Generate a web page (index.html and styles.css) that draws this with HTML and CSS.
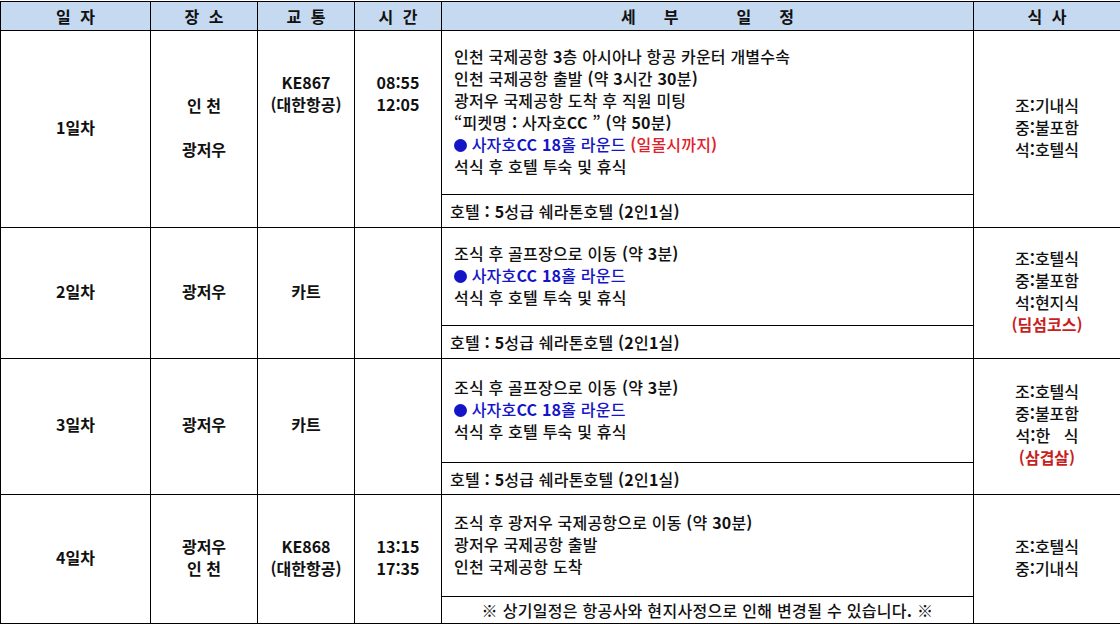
FILE: index.html
```html
<!DOCTYPE html>
<html lang="ko">
<head>
<meta charset="utf-8">
<link rel="stylesheet" href="styles.css">
</head>
<body>
<table class="sched">
  <colgroup>
    <col class="c-day"><col class="c-place"><col class="c-trans"><col class="c-time"><col class="c-detail"><col class="c-meal">
  </colgroup>
  <thead>
    <tr class="head">
      <th>일 자</th><th>장 소</th><th>교 통</th><th>시 간</th>
      <th><span class="sp">세</span><span class="sp">부</span><span class="sp wide">일</span><span class="sp">정</span></th>
      <th>식 사</th>
    </tr>
  </thead>
  <tbody>
    <tr class="r1a">
      <td rowspan="2" class="b">1일차</td>
      <td rowspan="2" class="b">인 천<br>&nbsp;<br>광저우</td>
      <td rowspan="2" class="b up">KE867<br>(대한항공)</td>
      <td rowspan="2" class="b up">08:55<br>12:05</td>
      <td class="detail">인천 국제공항 <b>3</b>층 아시아나 항공 카운터 개별수속<br>인천 국제공항 출발 <b>(</b>약 <b>3</b>시간 <b>30</b>분<b>)</b><br>광저우 국제공항 도착 후 직원 미팅<br>“피켓명 <b>:</b> 사자호<b>CC</b> ” <b>(</b>약 <b>50</b>분<b>)</b><br><span class="blue"><span class="dot"></span> 사자호<b>CC 18</b>홀 라운드</span> <span class="red"><b>(</b>일몰시까지<b>)</b></span><br>석식 후 호텔 투숙 및 휴식</td>
      <td rowspan="2" class="meal">조<b>:</b>기내식<br>중<b>:</b>불포함<br>석<b>:</b>호텔식</td>
    </tr>
    <tr class="hotel"><td class="hot">호텔 <b>: 5</b>성급 쉐라톤호텔 <b>(2</b>인<b>1</b>실<b>)</b></td></tr>

    <tr class="r2a">
      <td rowspan="2" class="b">2일차</td>
      <td rowspan="2" class="b">광저우</td>
      <td rowspan="2" class="b">카트</td>
      <td rowspan="2" class="b"></td>
      <td class="detail">조식 후 골프장으로 이동 <b>(</b>약 <b>3</b>분<b>)</b><br><span class="blue"><span class="dot"></span> 사자호<b>CC 18</b>홀 라운드</span><br>석식 후 호텔 투숙 및 휴식</td>
      <td rowspan="2" class="meal">조<b>:</b>호텔식<br>중<b>:</b>불포함<br>석<b>:</b>현지식<br><span class="mred">(딤섬코스)</span></td>
    </tr>
    <tr class="hotel"><td class="hot">호텔 <b>: 5</b>성급 쉐라톤호텔 <b>(2</b>인<b>1</b>실<b>)</b></td></tr>

    <tr class="r3a">
      <td rowspan="2" class="b">3일차</td>
      <td rowspan="2" class="b">광저우</td>
      <td rowspan="2" class="b">카트</td>
      <td rowspan="2" class="b"></td>
      <td class="detail">조식 후 골프장으로 이동 <b>(</b>약 <b>3</b>분<b>)</b><br><span class="blue"><span class="dot"></span> 사자호<b>CC 18</b>홀 라운드</span><br>석식 후 호텔 투숙 및 휴식</td>
      <td rowspan="2" class="meal">조<b>:</b>호텔식<br>중<b>:</b>불포함<br>석<b>:</b>한&nbsp;&nbsp;&nbsp;식<br><span class="mred">(삼겹살)</span></td>
    </tr>
    <tr class="hotel h3"><td class="hot">호텔 <b>: 5</b>성급 쉐라톤호텔 <b>(2</b>인<b>1</b>실<b>)</b></td></tr>

    <tr class="r4a">
      <td rowspan="2" class="b">4일차</td>
      <td rowspan="2" class="b">광저우<br>인 천</td>
      <td rowspan="2" class="b">KE868<br>(대한항공)</td>
      <td rowspan="2" class="b">13:15<br>17:35</td>
      <td class="detail">조식 후 광저우 국제공항으로 이동 <b>(</b>약 <b>30</b>분<b>)</b><br>광저우 국제공항 출발<br>인천 국제공항 도착</td>
      <td rowspan="2" class="meal">조<b>:</b>호텔식<br>중<b>:</b>기내식</td>
    </tr>
    <tr class="hotel h4"><td class="note">※ 상기일정은 항공사와 현지사정으로 인해 변경될 수 있습니다<b>.</b> ※</td></tr>
  </tbody>
</table>
</body>
</html>
```

FILE: styles.css
```css
html, body {
  margin: 0;
  padding: 0;
  background: #ffffff;
}
body {
  font-family: "Noto Sans CJK KR", "Noto Sans", sans-serif;
  font-size: 16px;
  color: #111111;
}
.sched {
  border-collapse: collapse;
  table-layout: fixed;
  width: 1120px;
  margin-top: 1px;
}
.c-day { width: 150px; }
.c-place { width: 107px; }
.c-trans { width: 97px; }
.c-time { width: 87px; }
.c-detail { width: 532px; }
.c-meal { width: 147px; }

.sched th, .sched td {
  border: 1px solid #000;
  padding: 0;
  line-height: 22px;
  vertical-align: middle;
  overflow: hidden;
  white-space: nowrap;
}
.sched b { font-weight: 700; }
.head th {
  height: 28px;
  background: #c5d9f1;
  font-weight: 700;
  word-spacing: 5px;
  text-align: center;
}
.sp { display: inline-block; margin: 0 14px; }
.sp.wide { margin-left: 44px; }

.b {
  text-align: center;
  font-weight: 700;
  padding-bottom: 5px !important;
}
.up { padding-bottom: 72px !important; }

.detail {
  padding-left: 12px !important;
  padding-bottom: 3px !important;
  font-weight: 500;
  letter-spacing: 0.2px;
}
.hot {
  padding-left: 8px !important;
  font-weight: 500;
  letter-spacing: 0.2px;
}
.note {
  text-align: center;
  font-weight: 500;
  letter-spacing: 0.3px;
}
.meal {
  text-align: center;
  font-weight: 500;
  padding-bottom: 5px !important;
}
.blue { color: #1515c8; }
.red { color: #e0212b; }
.mred { color: #c81e1e; font-weight: 700; }
.dot {
  display: inline-block;
  width: 13px;
  height: 13px;
  border-radius: 50%;
  background: #1515c8;
  vertical-align: -1px;
}

.r1a td.detail { height: 160px; }
.r2a td.detail { height: 94px; }
.r3a td.detail { height: 100px; }
.r4a td.detail { height: 98px; }
.hotel td { height: 32px; }
.h3 td { height: 31px; }
.h4 td { height: 26px; }
```
